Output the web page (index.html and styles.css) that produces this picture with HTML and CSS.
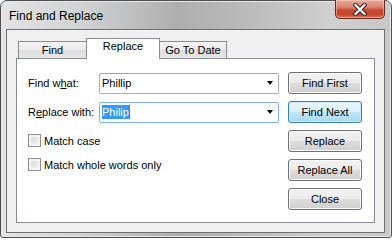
FILE: index.html
```html
<!DOCTYPE html>
<html lang="en">
<head>
    <meta charset="UTF-8">
    <title>Find and Replace</title>
    <link rel="stylesheet" href="styles.css">
</head>
<body>

<div class="window">
    <!-- Title bar -->
    <div class="titlebar">
        <span class="title">Find and Replace</span>
        <div class="close-btn">
            <svg width="14" height="13" viewBox="0 0 14 13">
                <path d="M2.5 2 L11.5 11 M11.5 2 L2.5 11" stroke="#3b2521" stroke-width="4.4" stroke-linecap="square"/>
                <path d="M2.5 2 L11.5 11 M11.5 2 L2.5 11" stroke="#ffffff" stroke-width="2.2" stroke-linecap="square"/>
            </svg>
        </div>
    </div>

    <div class="client">
        <!-- Tabs -->
        <div class="tabs">
            <div class="tab tab-find">Find</div>
            <div class="tab tab-active">Replace</div>
            <div class="tab tab-date">Go To Date</div>
        </div>

        <div class="panel">
            <div class="fields">
                <div class="row">
                    <span class="label">Find w<u>h</u>at:</span>
                    <div class="combo">
                        <span class="value">Phillip</span>
                        <span class="arrow"></span>
                    </div>
                </div>
                <div class="row">
                    <span class="label">R<u>e</u>place with:</span>
                    <div class="combo combo-focus">
                        <span class="value"><span class="selected">Philip</span><span class="caret"></span></span>
                        <span class="arrow"></span>
                    </div>
                </div>
                <div class="check">
                    <span class="box"></span>
                    <span>Match case</span>
                </div>
                <div class="check">
                    <span class="box"></span>
                    <span>Match whole words only</span>
                </div>
            </div>

            <div class="buttons">
                <div class="btn">Find First</div>
                <div class="btn btn-default">Find Next</div>
                <div class="btn">Replace</div>
                <div class="btn">Replace All</div>
                <div class="btn">Close</div>
            </div>
        </div>
    </div>
</div>

</body>
</html>
```

FILE: styles.css
```css
body {
    margin: 0;
    background: #ffffff;
    font-family: "Liberation Sans", Arial, sans-serif;
    font-size: 11px;
    color: #000000;
}

.window {
    width: 392px;
    height: 238px;
    box-sizing: border-box;
    border: 1px solid #4e4e4e;
    border-radius: 7px 7px 3px 3px;
    padding: 0 6px 4px 5px;
    background: linear-gradient(to right, #e2e4e6 0%, #d2d3d5 20%, #aeaeae 45%, #b8b8b8 60%, #d0d0d0 85%, #c8c8c8 100%);
    box-shadow: inset 0 0 0 1px #e8e8e8;
}

/* Title bar */
.titlebar {
    height: 28px;
    display: flex;
    justify-content: space-between;
    align-items: flex-start;
}

.title {
    font-size: 12px;
    margin: 8px 0 0 3px;
    color: #000000;
}

.close-btn {
    width: 50px;
    height: 19px;
    box-sizing: border-box;
    margin-top: -1px;
    margin-right: 0;
    border: 1px solid #5c2a22;
    border-top: none;
    border-radius: 0 0 5px 5px;
    background: linear-gradient(to bottom, #e9a99a 0%, #d98470 40%, #c94b33 55%, #c4432b 80%, #e0775c 100%);
    box-shadow: inset 0 0 0 1px rgba(255, 220, 210, 0.45);
    display: flex;
    justify-content: center;
    align-items: center;
}

/* Client area */
.client {
    height: 204px;
    box-sizing: border-box;
    border: 1px solid #6f6f6f;
    background: #f0f0f0;
    padding: 8px 9px 9px 9px;
    display: flex;
    flex-direction: column;
}

.tabs {
    display: flex;
    align-items: flex-end;
    height: 20px;
    margin-left: 2px;
    position: relative;
    z-index: 1;
}

.tab {
    height: 17px;
    box-sizing: border-box;
    border: 1px solid #898c95;
    border-bottom: none;
    background: linear-gradient(to bottom, #f3f3f3 0%, #ebebeb 50%, #dddddd 51%, #e6e6e6 100%);
    text-align: center;
    line-height: 17px;
}

.tab-find {
    width: 69px;
}

.tab-active {
    width: 74px;
    height: 21px;
    margin: 0 -1px -1px -1px;
    background: #ffffff;
    line-height: 15px;
    position: relative;
    z-index: 2;
}

.tab-date {
    width: 68px;
}

.panel {
    flex: 1;
    border: 1px solid #898c95;
    background: #ffffff;
    display: flex;
    padding: 13px 0 0 11px;
}

.fields {
    width: 251px;
    display: flex;
    flex-direction: column;
    gap: 7px;
}

.row {
    display: flex;
    align-items: center;
    height: 22px;
}

.label {
    width: 71px;
}

.combo {
    width: 180px;
    height: 21px;
    box-sizing: border-box;
    border: 1px solid #abadb3;
    border-top-color: #a3a6ad;
    border-radius: 2px;
    display: flex;
    align-items: center;
    justify-content: space-between;
    padding: 0 5px 0 2px;
}

.combo-focus {
    border-color: #7eb4ea;
}

.value {
    display: flex;
    align-items: center;
}

.selected {
    background: #3399ff;
    color: #ffffff;
    padding: 1px 0;
}

.caret {
    width: 1px;
    height: 14px;
    background: #cc5a18;
}

.arrow {
    width: 0;
    height: 0;
    border-left: 3.5px solid transparent;
    border-right: 3.5px solid transparent;
    border-top: 4px solid #000000;
    margin-right: 0;
}

.check {
    display: flex;
    align-items: center;
    gap: 3px;
    height: 13px;
    margin-top: 4px;
}

.box {
    width: 13px;
    height: 13px;
    box-sizing: border-box;
    border: 1px solid #8e8f8f;
    background: linear-gradient(135deg, #dcdcdc 0%, #f2f2f2 100%);
    box-shadow: inset 0 0 0 2px #f4f4f4;
}

.buttons {
    margin-left: 9px;
    width: 74px;
    display: flex;
    flex-direction: column;
    gap: 7px;
}

.btn {
    height: 22px;
    box-sizing: border-box;
    border: 1px solid #707070;
    border-radius: 3px;
    background: linear-gradient(to bottom, #f2f2f2 0%, #ebebeb 50%, #dddddd 51%, #cfcfcf 100%);
    box-shadow: inset 0 0 0 1px #fcfcfc;
    display: flex;
    align-items: center;
    justify-content: center;
}

.btn-default {
    border-color: #3c7fb1;
    background: linear-gradient(to bottom, #eaf6fd 0%, #d9f0fc 50%, #bee6fd 51%, #a7d9f5 100%);
    box-shadow: inset 0 0 0 1px #c8ecfc;
}
```
